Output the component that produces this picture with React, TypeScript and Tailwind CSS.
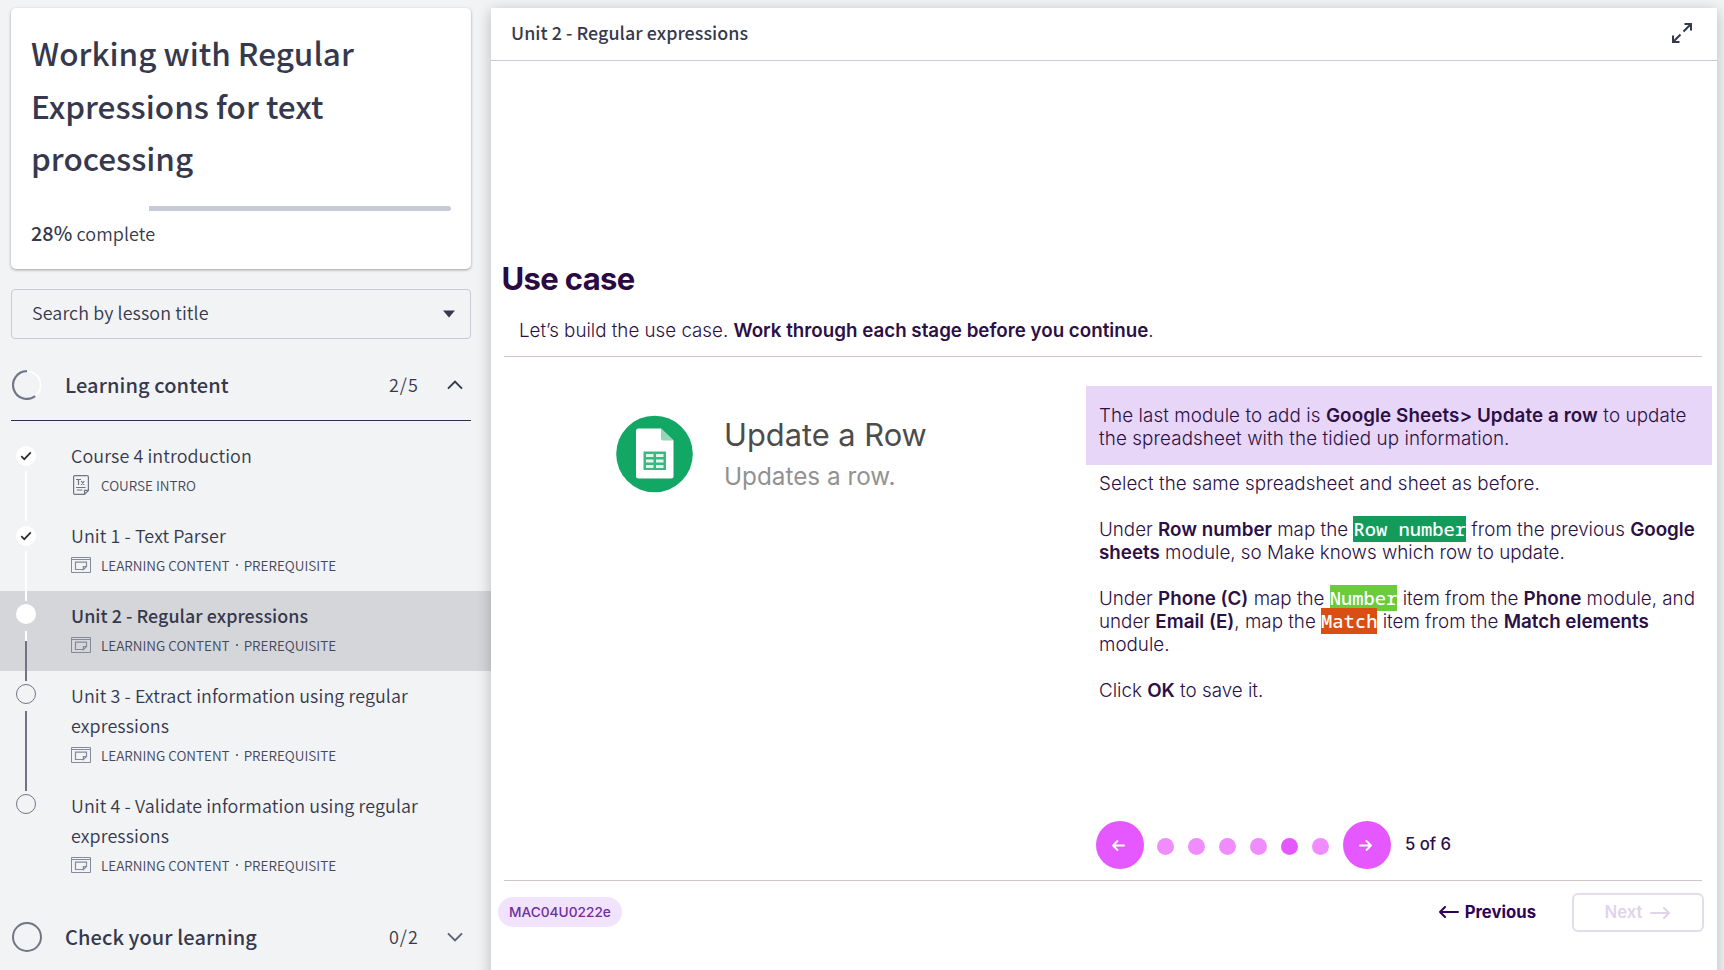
import type { ReactNode } from 'react';

const sans = "font-['Noto_Sans_CJK_SC',sans-serif]";

function CheckIcon() {
  return (
    <svg width="12" height="10" viewBox="0 0 12 10" fill="none" stroke="#2b2b33" strokeWidth="1.7">
      <path d="M1.2 5.2 4.3 8.2 10.8 1.4" />
    </svg>
  );
}

function DocIcon() {
  return (
    <svg width="16" height="20" viewBox="0 0 16 20" fill="none" stroke="#717586" strokeWidth="1.2">
      <path d="M11.5 19.4H2A1.4 1.4 0 0 1 .6 18V2A1.4 1.4 0 0 1 2 .6h12A1.4 1.4 0 0 1 15.4 2v13.4l-3.9 4v-4h3.9" />
      <path d="M3 4.5h5M5.5 4.5V10M8.2 6l3 4M11.2 6l-3 4M3 12.5h9.5M3.8 15h5.5" />
    </svg>
  );
}

function ContentIcon() {
  return (
    <svg width="20" height="16" viewBox="0 0 20 16" fill="none" stroke="#85899a" strokeWidth="1">
      <path d="M.5.5h19v15H.5zM.5 2.5h19" />
      <path strokeWidth="1.2" d="M12.4 12.5H4.5v-7.4h11v4.4l-3.1 3v-3h3.1" />
    </svg>
  );
}

function Chevron({ up }: { up?: boolean }) {
  return (
    <svg width="16" height="10" viewBox="0 0 16 10" fill="none" stroke={up ? '#36394d' : '#5f6375'} strokeWidth="2">
      <path d={up ? 'M1 8.6 8 1.6 15 8.6' : 'M1 1.4 8 8.4 15 1.4'} />
    </svg>
  );
}

type Lesson = {
  lines: string[];
  tags: string[];
  doc?: boolean;
  state: 'done' | 'current' | 'todo';
  marker: string;
  rails: string[];
};

const lessons: Lesson[] = [
  { lines: ['Course 4 introduction'], tags: ['COURSE INTRO'], doc: true, state: 'done', marker: 'pt-[15px]', rails: ['mt-[5px] h-[50px] bg-white'] },
  { lines: ['Unit 1 - Text Parser'], tags: ['LEARNING CONTENT', 'PREREQUISITE'], state: 'done', marker: 'pt-[15px]', rails: ['mt-[5px] h-[50px] bg-white'] },
  { lines: ['Unit 2 - Regular expressions'], tags: ['LEARNING CONTENT', 'PREREQUISITE'], state: 'current', marker: 'pt-[13px]', rails: ['mt-[7px] h-[10px] bg-white', 'h-[40px] bg-[#6f7385]'] },
  { lines: ['Unit 3 - Extract information using regular', 'expressions'], tags: ['LEARNING CONTENT', 'PREREQUISITE'], state: 'todo', marker: 'pt-[13px]', rails: ['mt-[7px] h-[80px] bg-[#6f7385]'] },
  { lines: ['Unit 4 - Validate information using regular', 'expressions'], tags: ['LEARNING CONTENT', 'PREREQUISITE'], state: 'todo', marker: 'pt-[13px]', rails: [] },
];

function LessonRow({ l }: { l: Lesson }) {
  return (
    <li className={`flex pl-4 ${l.lines.length > 1 ? 'h-[110px]' : 'h-20'} ${l.state === 'current' ? 'bg-[#d5d6da]' : ''}`}>
      <div className={`relative flex w-5 shrink-0 flex-col items-center ${l.marker}`}>
        <div className={`flex size-5 shrink-0 items-center justify-center rounded-full ${l.state === 'todo' ? 'border border-[#717586]' : 'bg-white'}`}>
          {l.state === 'done' && <CheckIcon />}
        </div>
        {l.rails.map((r) => <div key={r} className={`w-[2px] shrink-0 ${r}`} />)}
      </div>
      <div className="pl-[35px] pt-[9px]">
        <div className={`text-[17.9px] leading-[30px] whitespace-nowrap ${l.state === 'current' ? 'font-medium tracking-[0.04px]' : 'font-[350] tracking-[0.1px]'}`}>
          {l.lines.map((t) => <div key={t}>{t}</div>)}
        </div>
        <div className="flex h-[30px] items-center text-[13.5px] leading-5 font-[350] text-[#45485a]">
          <span className={`flex w-[30px] shrink-0 ${l.doc ? 'pl-[2px]' : ''}`}>{l.doc ? <DocIcon /> : <ContentIcon />}</span>
          {l.tags.map((t, i) => (
            <span key={t} className="flex items-center">
              {i > 0 && <span className="mx-[6px] size-[2px] rounded-full bg-[#45485a]" />}
              {t}
            </span>
          ))}
        </div>
      </div>
    </li>
  );
}

function SectionHead({ title, count, up, ring }: { title: string; count: string; up?: boolean; ring: ReactNode }) {
  return (
    <div className="flex h-[30px] items-center">
      {ring}
      <span className="ml-[23px] flex-1 text-[20px] font-medium tracking-[0.1px]">{title}</span>
      <span className="pb-[2px] text-[18px] font-[350] tracking-[1.1px]">{count}</span>
      <span className="mr-2 ml-7"><Chevron up={up} /></span>
    </div>
  );
}

function Sidebar() {
  return (
    <aside className={`w-[491px] shrink-0 pt-2 text-[#36394d] ${sans}`}>
      <div className="ml-[11px] h-[261px] w-[460px] rounded-[5px] bg-white px-5 pt-[18px] shadow-[0_1px_3px_rgba(0,0,0,0.35)]">
        <h1 className="text-[31.5px] leading-[52.5px] font-medium whitespace-nowrap">
          Working with Regular<br />Expressions for text<br />processing
        </h1>
        <div className="mt-[22px] flex h-[5px] w-[420px] justify-end rounded-[3px]">
          <div className="w-[302px] rounded-r-[3px] bg-[#c8cad7]" />
        </div>
        <div className="mt-2 text-[18px] leading-7 font-[350] tracking-[0.08px]">
          <span className="text-[19.8px] font-medium">28%</span> complete
        </div>
      </div>
      <div className="mt-5 ml-[11px] flex h-[50px] w-[460px] items-center justify-between rounded-[4px] border border-[#c8cad7] pr-[15px] pb-1 pl-5">
        <span className="text-[17.9px] font-[350] tracking-[0.1px]">Search by lesson title</span>
        <svg className="mt-1" width="12" height="8" viewBox="0 0 12 8"><path d="M0 .6h12L6 7.6z" fill="#36394d" /></svg>
      </div>
      <div className="mt-[31px] ml-[11px] h-[51px] w-[460px] border-b border-[#2f2e4f]">
        <SectionHead
          title="Learning content"
          count="2/5"
          up
          ring={
            <svg className="ml-[1px]" width="30" height="30" viewBox="0 0 30 30" fill="none">
              <circle cx="15" cy="15" r="14.5" stroke="#d3d5db" strokeWidth="1" strokeDasharray="2 1.5" />
              <circle cx="15" cy="15" r="13.8" stroke="#fff" strokeWidth="2" />
              <path d="M15 1.1A13.9 13.9 0 1 0 23.2 26.2" stroke="#717586" strokeWidth="2.2" />
            </svg>
          }
        />
      </div>
      <ul className="mt-[10px]">
        {lessons.map((l) => <LessonRow key={l.lines[0]} l={l} />)}
      </ul>
      <div className="mt-[31px] ml-[11px] w-[460px]">
        <SectionHead title="Check your learning" count="0/2" ring={<span className="ml-[1px] size-[30px] rounded-full border-2 border-[#717586]" />} />
      </div>
    </aside>
  );
}

function SheetsIcon() {
  return (
    <svg width="78" height="78" viewBox="0 0 78 78">
      <circle cx="39.5" cy="39" r="38.3" fill="#12a765" />
      <path d="M23.5 13.5H46L58.5 25.5V61a2.5 2.5 0 0 1-2.5 2.5H23.5A2.5 2.5 0 0 1 21 61V16a2.5 2.5 0 0 1 2.5-2.5z" fill="#fff" />
      <path d="M46 13.5 58.5 25.5H48a2 2 0 0 1-2-2z" fill="#93d7b8" />
      <path d="M28.5 36.5H51V55H28.5z" fill="#3cb77f" />
      <path d="M31 39h7.5v3H31zM41 39h7.5v3H41zM31 44.5h7.5v3H31zM41 44.5h7.5v3H41zM31 50h7.5v3H31zM41 50h7.5v3H41z" fill="#e3f5ec" />
    </svg>
  );
}

function Arrow({ right, w, h, sw, color }: { right?: boolean; w: number; h: number; sw: number; color: string }) {
  const m = h / 2;
  return (
    <svg width={w} height={h} viewBox={`0 0 ${w} ${h}`} fill="none" stroke={color} strokeWidth={sw} strokeLinecap="round" strokeLinejoin="round">
      {right
        ? <path d={`M1 ${m}H${w - 1}M${w - m} 1 ${w - 1} ${m} ${w - m} ${h - 1}`} />
        : <path d={`M${w - 1} ${m}H1M${m} 1 1 ${m} ${m} ${h - 1}`} />}
    </svg>
  );
}

function Token({ bg, children }: { bg: string; children: ReactNode }) {
  return <span className={`font-['Noto_Sans_Mono','DejaVu_Sans_Mono',monospace] text-[18.8px] font-medium text-white ${bg}`}>{children}</span>;
}

const dots = [1, 2, 3, 4, 5, 6];

function Slide() {
  return (
    <div className="px-[7px] pt-[198px] font-['Inter',sans-serif] text-[#2c0f46]">
      <h2 className="pl-[3.5px] text-[31px] leading-10 font-bold tracking-[-0.65px] text-[#2a0a42]">Use case</h2>
      <p className="mt-5 pl-[21px] text-[18.75px] leading-6 font-light">
        Let’s build the use case. <b className="font-semibold">Work through each stage before you continue</b>.
      </p>
      <div className="mt-[13px] mr-2 ml-[6px] h-px bg-[#cfc4c6]" />
      <div className="flex h-[523px]">
        <div className="flex w-[588px] shrink-0 pt-[58px] pl-[117px]">
          <SheetsIcon />
          <div className="ml-[31px]">
            <div className="text-[30.8px] leading-[39px] text-[#4c4c4c]">Update a Row</div>
            <div className="mt-[2px] text-[24.3px] leading-10 text-[#929292]">Updates a row.</div>
          </div>
        </div>
        <div className="flex w-[626px] shrink-0 flex-col pt-[29px] text-[18.8px] leading-[23px] font-light whitespace-nowrap">
          <div className="h-[79px] bg-[#e7d6f7] pt-[18px] pl-[13px]">
            <span className="tracking-[0.1px]">The last module to add is <b className="font-semibold">Google Sheets&gt; Update a row</b> to update</span><br />
            <span className="tracking-[0.11px]">the spreadsheet with the tidied up information.</span>
          </div>
          <div className="flex flex-col gap-[23px] pt-[6.5px] pl-[13px]">
            <p className="tracking-[0.08px]">Select the same spreadsheet and sheet as before.</p>
            <p>
              Under <b className="font-semibold">Row number</b> map the <Token bg="bg-[#139b5c]">Row number</Token> from the previous <b className="font-semibold">Google</b><br />
              <b className="font-semibold">sheets</b> module, so Make knows which row to update.
            </p>
            <p>
              Under <b className="font-semibold">Phone (C)</b> map the <Token bg="bg-[#6acb3c]">Number</Token> item from the <b className="font-semibold">Phone</b> module, and<br />
              under <b className="font-semibold">Email (E)</b>, map the <Token bg="bg-[#db4e12]">Match</Token> item from the <b className="font-semibold">Match elements</b><br />
              module.
            </p>
            <p>Click <b className="font-semibold">OK</b> to save it.</p>
          </div>
          <div className="mt-auto mb-[11px] flex items-center pl-[10px]">
            <button className="flex size-12 items-center justify-center rounded-full bg-[#e557ff] pr-[3px]">
              <Arrow w={13} h={11} sw={1.8} color="#fff" />
            </button>
            <div className="mt-[2px] mr-[14px] ml-[13px] flex gap-[14px]">
              {dots.map((d) => <span key={d} className={`size-[17px] rounded-full ${d === 5 ? 'bg-[#e557ff]' : 'bg-[#ef8dff]'}`} />)}
            </div>
            <button className="flex size-12 items-center justify-center rounded-full bg-[#e557ff] pr-[4px]">
              <Arrow right w={13} h={11} sw={1.8} color="#fff" />
            </button>
            <span className="ml-[14px] pb-[2px] text-[16.7px] font-medium">5 of 6</span>
          </div>
        </div>
      </div>
      <div className="mr-2 ml-[6px] h-px bg-[#cfc4c6]" />
      <div className="flex items-center pt-3 pr-[6px]">
        <span className="-mt-px flex h-[30px] items-center rounded-full bg-[#f0e3fb] px-[11px] pt-px text-[13.7px] font-[450] text-[#6f2da0]">MAC04U0222e</span>
        <button className="mr-9 ml-auto flex items-center gap-[6px] text-[16.7px] font-bold text-[#2e0359]">
          <Arrow w={20} h={12} sw={2} color="#2e0359" />Previous
        </button>
        <button className="flex h-[39px] w-[132px] items-center justify-center gap-[7px] rounded-[6px] border-2 border-[#e4dcec] pr-[2px] text-[16.8px] font-semibold text-[#dfd4ea]">
          Next<Arrow right w={20} h={12} sw={2} color="#dfd4ea" />
        </button>
      </div>
    </div>
  );
}

export default function App() {
  return (
    <div className="flex h-[970px] w-[1724px] overflow-hidden bg-[#f2f3f5]">
      <Sidebar />
      <main className="relative mt-2 h-[980px] w-[1226px] shrink-0 bg-white shadow-[0_3px_14px_rgba(0,0,0,0.24)]">
        <header className={`flex h-[53px] items-center justify-between border-b border-[#c8cad7] pr-[25px] pb-[3px] pl-[20px] text-[#36394d] ${sans}`}>
          <span className="pb-px text-[17.9px] font-medium tracking-[0.04px]">Unit 2 - Regular expressions</span>
          <svg width="20" height="20" viewBox="0 0 20 20" fill="none" stroke="#36394d" strokeWidth="2">
            <path d="M12.5 1H19v6.5M19 1l-7.5 7.5M7.5 19H1v-6.5M1 19l7.5-7.5" />
          </svg>
        </header>
        <Slide />
      </main>
    </div>
  );
}
